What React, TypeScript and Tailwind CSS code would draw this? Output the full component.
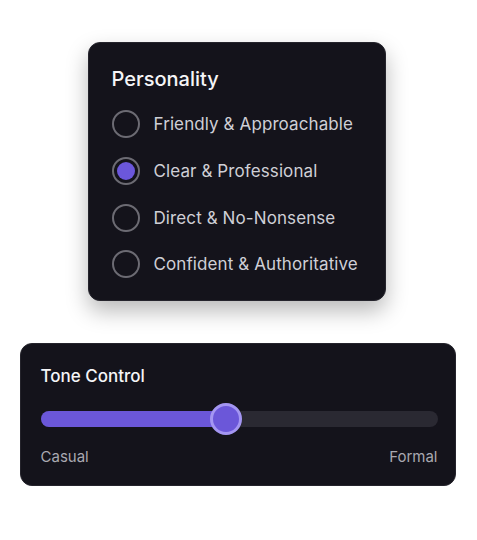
const options = [
  "Friendly & Approachable",
  "Clear & Professional",
  "Direct & No-Nonsense",
  "Confident & Authoritative",
];

function Radio({ checked }: { checked: boolean }) {
  return (
    <span className="flex h-[28px] w-[28px] flex-shrink-0 items-center justify-center rounded-full border-2 border-[#6c6b73]">
      {checked && <span className="h-[18px] w-[18px] rounded-full bg-[#6b57db]" />}
    </span>
  );
}

export default function App() {
  const tone = 46.8;

  return (
    <div
      className="flex min-h-[540px] w-full flex-col items-center bg-white pr-[2px] pt-[42px]"
      style={{ fontFamily: "Inter, 'Noto Sans', sans-serif" }}
    >
      {/* Personality card */}
      <div className="-ml-[2px] w-[298px] rounded-[12px] border border-[#25242c] bg-[#14131b] pb-[22px] pl-[23px] pr-4 pt-[22px] shadow-[0_10px_22px_rgba(0,0,0,0.28)]">
        <h2 className="text-[20px] font-medium leading-[28px] text-[#f5f5f7]">Personality</h2>
        <div className="mt-[17px] flex flex-col gap-[18.8px]">
          {options.map((label, i) => (
            <div key={label} className="flex h-[28px] items-center gap-[14px]">
              <Radio checked={i === 1} />
              <span className="whitespace-nowrap text-[17px] leading-[24px] tracking-[0.1px] text-[#cfcfd6]">{label}</span>
            </div>
          ))}
        </div>
      </div>

      {/* Tone control card */}
      <div className="mt-[42px] w-[436px] rounded-[12px] border border-[#25242c] bg-[#14131b] pb-[17px] pl-5 pr-[17px] pt-[20px]">
        <h3 className="text-[17px] font-medium leading-[24px] text-[#f5f5f7]">Tone Control</h3>
        <div className="relative mt-[23px] h-[16px] w-full rounded-full bg-[#2a2932]">
          <div className="h-full rounded-full bg-[#6b57d9]" style={{ width: `${tone}%` }} />
          <div
            className="absolute top-1/2 h-[32px] w-[32px] -translate-x-1/2 -translate-y-1/2 rounded-full border-[3px] border-[#a496f2] bg-[#6b57d9]"
            style={{ left: `${tone}%` }}
          />
        </div>
        <div className="mt-[19px] flex justify-between text-[15px] leading-[22px] text-[#a9a9b1]">
          <span>Casual</span>
          <span>Formal</span>
        </div>
      </div>
    </div>
  );
}
